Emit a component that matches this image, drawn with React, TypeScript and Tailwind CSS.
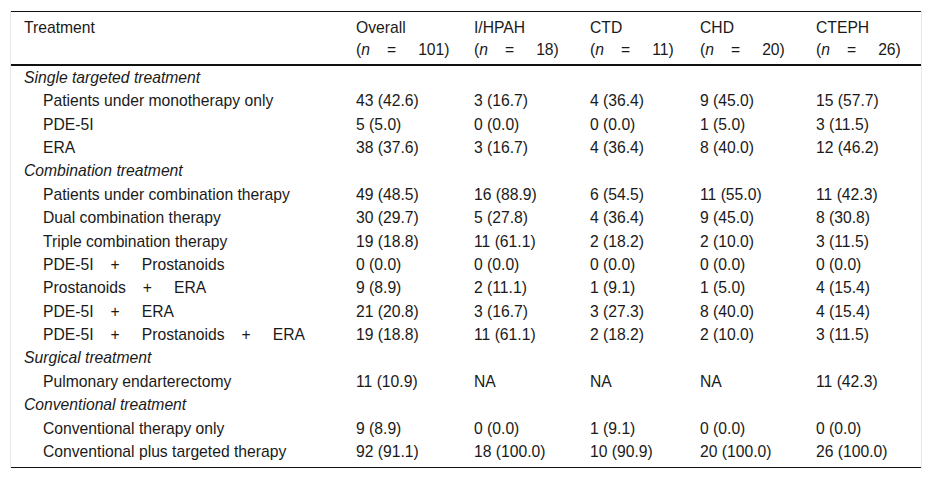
import React from "react";

type Row =
  | { kind: "section"; label: string }
  | { kind: "item"; label: React.ReactNode; values: string[] };

// spaced operator, like the wide " + " / " = " in the source
const Op = ({ c }: { c: string }) => <span className="ml-[17px] mr-[22px]">{c}</span>;

const combo = (...parts: string[]) => (
  <>
    {parts.map((p, i) => (
      <React.Fragment key={i}>
        {i > 0 && <Op c="+" />}
        {p}
      </React.Fragment>
    ))}
  </>
);

const rows: Row[] = [
  { kind: "section", label: "Single targeted treatment" },
  { kind: "item", label: "Patients under monotherapy only", values: ["43 (42.6)", "3 (16.7)", "4 (36.4)", "9 (45.0)", "15 (57.7)"] },
  { kind: "item", label: "PDE-5I", values: ["5 (5.0)", "0 (0.0)", "0 (0.0)", "1 (5.0)", "3 (11.5)"] },
  { kind: "item", label: "ERA", values: ["38 (37.6)", "3 (16.7)", "4 (36.4)", "8 (40.0)", "12 (46.2)"] },
  { kind: "section", label: "Combination treatment" },
  { kind: "item", label: "Patients under combination therapy", values: ["49 (48.5)", "16 (88.9)", "6 (54.5)", "11 (55.0)", "11 (42.3)"] },
  { kind: "item", label: "Dual combination therapy", values: ["30 (29.7)", "5 (27.8)", "4 (36.4)", "9 (45.0)", "8 (30.8)"] },
  { kind: "item", label: "Triple combination therapy", values: ["19 (18.8)", "11 (61.1)", "2 (18.2)", "2 (10.0)", "3 (11.5)"] },
  { kind: "item", label: combo("PDE-5I", "Prostanoids"), values: ["0 (0.0)", "0 (0.0)", "0 (0.0)", "0 (0.0)", "0 (0.0)"] },
  { kind: "item", label: combo("Prostanoids", "ERA"), values: ["9 (8.9)", "2 (11.1)", "1 (9.1)", "1 (5.0)", "4 (15.4)"] },
  { kind: "item", label: combo("PDE-5I", "ERA"), values: ["21 (20.8)", "3 (16.7)", "3 (27.3)", "8 (40.0)", "4 (15.4)"] },
  { kind: "item", label: combo("PDE-5I", "Prostanoids", "ERA"), values: ["19 (18.8)", "11 (61.1)", "2 (18.2)", "2 (10.0)", "3 (11.5)"] },
  { kind: "section", label: "Surgical treatment" },
  { kind: "item", label: "Pulmonary endarterectomy", values: ["11 (10.9)", "NA", "NA", "NA", "11 (42.3)"] },
  { kind: "section", label: "Conventional treatment" },
  { kind: "item", label: "Conventional therapy only", values: ["9 (8.9)", "0 (0.0)", "1 (9.1)", "0 (0.0)", "0 (0.0)"] },
  { kind: "item", label: "Conventional plus targeted therapy", values: ["92 (91.1)", "18 (100.0)", "10 (90.9)", "20 (100.0)", "26 (100.0)"] },
];

const groups = [
  { name: "Overall", n: "101" },
  { name: "I/HPAH", n: "18" },
  { name: "CTD", n: "11" },
  { name: "CHD", n: "20" },
  { name: "CTEPH", n: "26" },
];

const cols = "grid grid-cols-[345px_118px_116px_110px_116px_1fr]";

export default function App() {
  return (
    <div className="w-[932px] h-[480px] bg-white pt-[11px] text-[15.7px] text-[#1a1a1a] font-['Liberation_Sans',Arial,sans-serif]">
      <div className="ml-[10px] w-[912px] border-x border-[#e6e6e6]">
        <div className="border-t border-[#111] border-b-2 border-b-[#111]">
          <div className={`${cols} pt-[5px] pb-[2px] leading-[22.4px]`}>
            <div className="pl-[13px]">Treatment</div>
            {groups.map((g) => (
              <div key={g.name}>
                <div>{g.name}</div>
                <div>
                  (<i>n</i>
                  <Op c="=" />
                  {g.n})
                </div>
              </div>
            ))}
          </div>
        </div>
        <div className="pb-[4px] border-b border-[#111]">
          {rows.map((r, i) =>
            r.kind === "section" ? (
              <div key={i} className="h-[23.4px] flex items-center pl-[13px] italic">
                {r.label}
              </div>
            ) : (
              <div key={i} className={`${cols} h-[23.4px] items-center`}>
                <div className="pl-[32px] whitespace-nowrap">{r.label}</div>
                {r.values.map((v, j) => (
                  <div key={j} className="whitespace-nowrap">{v}</div>
                ))}
              </div>
            )
          )}
        </div>
      </div>
    </div>
  );
}
